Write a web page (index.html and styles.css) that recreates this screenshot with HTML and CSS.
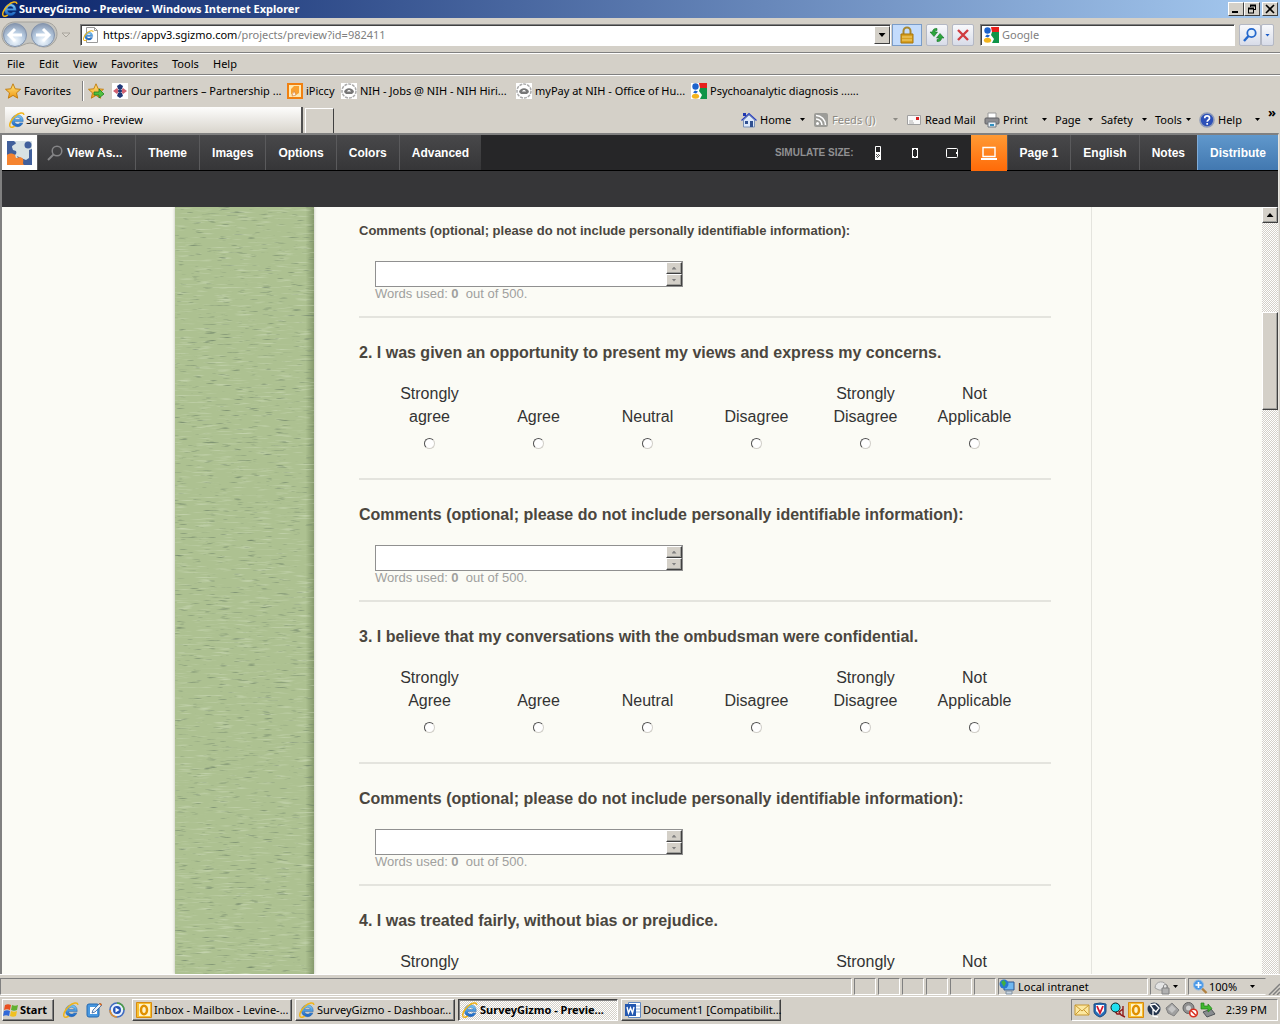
FILE: index.html
```html
<!DOCTYPE html>
<html lang="en">
<head>
<meta charset="utf-8">
<title>SurveyGizmo - Preview - Windows Internet Explorer</title>
<link rel="stylesheet" href="styles.css">
</head>
<body>
<svg class="sprite" aria-hidden="true">
  <defs>
    <linearGradient id="blueball" x1="0" y1="0" x2="0" y2="1"><stop offset="0" stop-color="#7fd0fa"/><stop offset="1" stop-color="#1660c0"/></linearGradient>
    <radialGradient id="navball" cx=".5" cy=".75" r=".7"><stop offset="0" stop-color="#f4faff"/><stop offset=".6" stop-color="#b4c8de"/><stop offset="1" stop-color="#8c9cb4"/></radialGradient>
    <linearGradient id="gold" x1="0" y1="0" x2="0" y2="1"><stop offset="0" stop-color="#ffe680"/><stop offset="1" stop-color="#f09810"/></linearGradient>
  </defs>
  <symbol id="ie" viewBox="0 0 16 16">
    <path d="M14.2 9.6H5.6c.2 1.600 1.300 2.500 2.900 2.500 1 0 1.800-.4 2.300-1.200h3c-.8 2.300-2.700 3.800-5.300 3.800-3.500 0-6-2.400-6-5.900 0-3.400 2.500-5.900 6-5.900 3.600 0 6 2.600 5.700 6.700zM5.700 7.400h5.500C11 6 10 5.200 8.500 5.200S5.900 6 5.700 7.400z" fill="url(#blueball)" stroke="#1450a0" stroke-width=".4"/>
    <path d="M15 2.800C14.500 0 10 .6 6 4.200 2 7.800-.4 12.900 1.300 14.700c1 1 2.900.5 4.500-.6" fill="none" stroke="#f0b418" stroke-width="1.500"/>
  </symbol>
  <symbol id="iepage" viewBox="0 0 16 16">
    <path d="M3.500.5h8l3 3v12h-11z" fill="#fff" stroke="#9a9a9a"/><path d="M11.500.5v3h3" fill="none" stroke="#9a9a9a"/>
    <use href="#ie" x="0" y="3" width="11" height="11"/>
  </symbol>
  <symbol id="star" viewBox="0 0 16 16"><path d="M8 .8l2.200 5 5.300.5-4 3.600 1.200 5.300L8 12.400l-4.700 2.800 1.200-5.300-4-3.600 5.300-.5z" fill="url(#gold)" stroke="#c07808" stroke-width=".9"/></symbol>
  <symbol id="google" viewBox="0 0 16 16">
    <path d="M0 0h16v16H0z" fill="#fff"/><path d="M8 0h8v5H9z" fill="#e8201c"/><path d="M9 5h7v11H9l2-4-3-4z" fill="#0f9448"/>
    <ellipse cx="4.500" cy="3.500" rx="3.200" ry="3.300" fill="#1c62cc"/><path d="M4 7.500l3 1-2 2-3-1z" fill="#1c62cc"/><ellipse cx="4.500" cy="13.300" rx="3.600" ry="2.500" fill="#f4b41c"/>
  </symbol>
  <symbol id="eagle" viewBox="0 0 16 16"><path d="M0 0h16v16H0z" fill="#fff"/><circle cx="8" cy="8" r="7" fill="none" stroke="#aaa" stroke-width="1.500" stroke-dasharray="3 1"/><path d="M3 9c1-5 9-5 10 0l-2 2H5z" fill="#777"/><path d="M6 8.500c1-2 3-2 4 0z" fill="#fff"/></symbol>
  <symbol id="outlook" viewBox="0 0 16 16"><path d="M.5.500h15v15H.5z" fill="#f7c030" stroke="#d88a10"/><path d="M3 2h11v12H3z" fill="#fff3c8"/><ellipse cx="8" cy="8" rx="3" ry="4.200" fill="none" stroke="#e09000" stroke-width="2.500"/></symbol>
  <symbol id="magnifier" viewBox="0 0 16 16"><circle cx="9.500" cy="6" r="4.200" fill="#e4f0fc" stroke="#2468cc" stroke-width="1.800"/><path d="M6.500 9L2 14" stroke="#2468cc" stroke-width="2.400"/></symbol>
</svg>

<header class="titlebar">
  <svg class="icon"><use href="#ie"/></svg>
  <h1 class="title">SurveyGizmo - Preview - Windows Internet Explorer</h1>
  <button class="winbtn" aria-label="Minimize"><svg width="12" height="10"><path d="M2 7h6v2H2z"/></svg></button>
  <button class="winbtn" aria-label="Restore"><svg width="12" height="10"><path d="M4 .5h6v2H4zM9 1h1v5H9zM4 1h1v2H4zM8 5h2v1H8zM2 3.500h6v2H2zM2 4h1v5H2zM7 4h1v5H7zM2 8.500h6v1H2z"/></svg></button>
  <button class="winbtn winclose" aria-label="Close"><svg width="12" height="10"><path d="M2 1l8 8M10 1L2 9" stroke="#000" stroke-width="1.600"/></svg></button>
</header>

<div class="addressbar">
  <svg class="nav" width="74" height="30" viewBox="0 0 74 30">
    <path d="M15 2h29c8 0 13 5 13 12s-6 13-13 13c-6 0-9-4-14-4s-9 4-15 4C7 27 2 22 2 15S7 2 15 2z" fill="#c4c4c0" stroke="#a4a29c"/>
    <circle cx="15" cy="15" r="11.500" fill="url(#navball)" stroke="#8494ac"/><circle cx="43" cy="15" r="11.500" fill="url(#navball)" stroke="#8494ac"/>
    <path d="M22 15H9m6-6l-6 6 6 6M36 15h13m-6-6l6 6-6 6" fill="none" stroke="#fff" stroke-width="3"/>
    <path d="M62 13h8l-4 4z" fill="#dcd8d0" stroke="#a8a49c"/>
  </svg>
  <label class="urlbox">
    <svg class="icon"><use href="#iepage"/></svg>
    <span class="url" role="textbox">https<i>://</i>appv3.sgizmo.com<i>/projects/preview?id=982411</i></span>
    <button class="drop" aria-label="Show address history"><span class="caret wide"></span></button>
  </label>
  <button class="lock" aria-label="Security report"><svg width="16" height="18"><path d="M4.500 9V5a3.500 3.500 0 017 0v4" fill="none" stroke="#a88830" stroke-width="2"/><path d="M2 8h12v9H2z" fill="#d8a020" stroke="#a87408"/><path d="M3 11h10M3 14h10" stroke="#f4d478"/></svg></button>
  <button class="tool refresh" aria-label="Refresh"><svg width="16" height="16"><path d="M8 1.500C5.500 1 3.500 2.500 3.500 5H1l4 4.500L8.500 5H6c0-1 .7-1.700 2-1.500z" fill="#2ca63c" stroke="#187028" stroke-width=".6"/><path d="M8 14.500c2.500.5 4.500-1 4.500-3.500H15l-4-4.500L7.500 11H10c0 1-.7 1.700-2 1.500z" fill="#2ca63c" stroke="#187028" stroke-width=".6"/></svg></button>
  <button class="tool stop" aria-label="Stop"><svg width="16" height="16"><path d="M3 3l10 10M13 3L3 13" stroke="#d03c40" stroke-width="2.400"/></svg></button>
  <div class="search"><svg class="icon"><use href="#google"/></svg><input class="searchinput" type="text" placeholder="Google" aria-label="Search"></div>
  <div class="go">
    <button class="tool" aria-label="Search"><svg class="icon"><use href="#magnifier"/></svg></button><button class="tool narrow" aria-label="Search options"><span class="caret blue"></span></button>
  </div>
</div>

<nav class="menubar">
  <a href="#">File</a><a href="#">Edit</a><a href="#">View</a><a href="#">Favorites</a><a href="#">Tools</a><a href="#">Help</a>
</nav>

<nav class="favbar">
  <a href="#"><svg class="icon"><use href="#star"/></svg>Favorites</a>
  <a href="#" class="addfav" aria-label="Add to Favorites Bar"><svg class="icon"><use href="#star"/><path d="M6 9h5V6l5 5-5 4v-3H6z" fill="#50c040" stroke="#208020" stroke-width=".8"/></svg></a>
  <a href="#"><svg class="icon"><path d="M0 0h16v16H0z" fill="#fff"/><path d="M8 1l3 2-1 3H6L5 3zM8 15l3-2-1-3H6l-1 3z" fill="#203878"/><path d="M1 8l4-3 2 3-2 3zM15 8l-4-3-2 3 2 3z" fill="#d06070"/><circle cx="8" cy="8" r="2" fill="#203878"/></svg>Our partners – Partnership ...</a>
  <a href="#"><svg class="icon"><path d="M1 1h14v14H1z" fill="#ffe8b0" stroke="#f08010" stroke-width="2"/><path d="M4 12V6l3-3h5v7l-3 2-2-4z" fill="#f8a030"/><path d="M5 13l2-5 2 4z" fill="#fff" stroke="#d07020" stroke-width=".6"/></svg>iPiccy</a>
  <a href="#"><svg class="icon"><use href="#eagle"/></svg>NIH - Jobs @ NIH - NIH Hiri...</a>
  <a href="#"><svg class="icon"><use href="#eagle"/></svg>myPay at NIH - Office of Hu...</a>
  <a href="#"><svg class="icon"><use href="#google"/></svg>Psychoanalytic diagnosis ......</a>
</nav>

<div class="tabrow">
  <button class="tab"><svg class="icon"><use href="#ie"/></svg>SurveyGizmo - Preview</button>
  <button class="newtab" aria-label="New tab"></button>
  <div class="commands">
    <button><svg class="icon"><path d="M2.500 8v7h11V8L8 3z" fill="#dce8fa" stroke="#7890b8"/><path d="M.5 8.500L8 1.500l7.500 7" fill="none" stroke="#2840c0" stroke-width="1.200"/><path d="M2 1h3v3H2z" fill="#2038b0"/><path d="M4 9h3v3H4zM9 9h3v6H9z" fill="#305090"/></svg><span>Home</span><span class="caret"></span></button>
    <button class="off"><svg class="icon"><rect x="1" y="1" width="14" height="14" rx="2" fill="#9c9c98"/><circle cx="4.500" cy="11.500" r="1.500" fill="#fff"/><path d="M3 7a6 6 0 016 6M3 3.500A9.500 9.500 0 0112.500 13" fill="none" stroke="#fff" stroke-width="1.600"/></svg><span>Feeds (J)</span><span class="caret"></span></button>
    <button><svg class="icon"><path d="M1.500 3.500h13v9h-13z" fill="#fafafa" stroke="#a0a0a0"/><path d="M10 5h3v3h-3z" fill="#d82020"/><path d="M3 9h4M3 11h5" stroke="#b0b0b0"/></svg><span>Read Mail</span></button>
    <button><svg class="icon"><path d="M4 1h8v6H4z" fill="#fff" stroke="#999"/><rect x="1" y="6" width="14" height="6" rx="1" fill="#8c8c90" stroke="#606064"/><path d="M4 10h8v5H4z" fill="#e8f0f8" stroke="#707880"/><path d="M6 12h4v2H6z" fill="#3090c0"/></svg><span>Print</span><span class="caret"></span></button>
    <button><span>Page</span><span class="caret"></span></button>
    <button><span>Safety</span><span class="caret"></span></button>
    <button><span>Tools</span><span class="caret"></span></button>
    <button><svg class="icon"><circle cx="8" cy="8" r="7" fill="#2c50b8" stroke="#909cb8" stroke-width="1.600"/><path d="M5.700 6.200c0-3 4.800-3 4.800 0 0 1.600-2.300 1.800-2.300 3.600M8.200 11v1.700" fill="none" stroke="#fff" stroke-width="1.700"/></svg><span>Help</span><span class="caret"></span></button>
    <button class="more" aria-label="More commands">»</button>
  </div>
</div>

<div class="view">
  <nav class="gizmo">
    <a href="#" class="logo" aria-label="SurveyGizmo"><svg width="25" height="24"><path d="M0 0h25v24H0z" fill="#d8e2e4"/><path d="M0 0h7l2 2c-1 2-4 2-4 4l1 3 3 1c1 2 0 4-2 4H0z" fill="#41609c"/><path d="M10 15l4 2 5 2 3-2V9l3-1v16H14z" fill="#41609c"/><path d="M11 11l4 1 3 4 3 0V10h-4z" fill="#d8e2e4"/><circle cx="21" cy="4" r="3.500" fill="#41609c"/><path d="M0 14c2-2 6-2 8 0 1 1 0 3 2 3 2-1 5-1 6 1 1 3-1 4 1 6H0z" fill="#f58430"/></svg></a>
    <a href="#" class="first"><svg class="icon"><circle cx="10" cy="6" r="4.800" fill="none" stroke="#858587" stroke-width="1.500"/><path d="M6.500 9.500L1 15" stroke="#858587" stroke-width="2"/></svg>View As...</a>
    <a href="#">Theme</a><a href="#">Images</a><a href="#">Options</a><a href="#">Colors</a><a href="#" class="last">Advanced</a>
    <span class="simulate">SIMULATE SIZE:</span>
    <button class="size" aria-label="Feature phone"><svg width="16" height="16"><path d="M5.500 1.500h5v13h-5z" fill="none" stroke="#fff"/><path d="M5 7h6v8H5z" fill="#fff"/><path d="M6 9h1v1H6zM8 9h1v1H8zM7 10h1v1H7zM9 10h1v1H9zM6 11h1v1H6zM8 11h1v1H8zM7 12h1v1H7z" fill="#555"/></svg></button>
    <button class="size" aria-label="Smartphone"><svg width="16" height="16"><path d="M5.500 3.500h5v9h-5z" fill="none" stroke="#fff"/><path d="M5 3h6v2H5zM5 11h6v2H5z" fill="#fff"/><path d="M7 4h2v1H7zM7 11h2v1H7z" fill="#28282a"/></svg></button>
    <button class="size" aria-label="Tablet"><svg width="16" height="16"><rect x="2.500" y="3.500" width="11" height="9" rx="1" fill="none" stroke="#fff"/><path d="M12 7h1v2h-1z" fill="#fff"/></svg></button>
    <button class="size active" aria-label="Desktop"><svg width="16" height="16"><path d="M2 2.500h12v9H2z" fill="none" stroke="#fff" stroke-width="1.400"/><path d="M0 13h16v2H0z" fill="#fff"/></svg></button>
    <a href="#">Page 1</a><a href="#">English</a><a href="#">Notes</a><a href="#" class="distribute">Distribute</a>
  </nav>
  <div class="subbar"></div>

  <div class="scroller">
    <div class="page">
      <div class="survey">
        <aside class="texture">
          <svg width="100%" height="100%" aria-hidden="true">
            <filter id="darkgrain" x="0" y="0" width="100%" height="100%" color-interpolation-filters="sRGB"><feTurbulence type="fractalNoise" baseFrequency=".07 .6" numOctaves="2" seed="4"/><feColorMatrix values="0 0 0 0 .42  0 0 0 0 .5  0 0 0 0 .4  3 0 0 0 -1.920"/></filter>
            <filter id="lightgrain" x="0" y="0" width="100%" height="100%" color-interpolation-filters="sRGB"><feTurbulence type="fractalNoise" baseFrequency=".05 .6" numOctaves="2" seed="9"/><feColorMatrix values="0 0 0 0 .82  0 0 0 0 .87  0 0 0 0 .75  2 0 0 0 -1.140"/></filter>
            <rect width="100%" height="100%" filter="url(#lightgrain)"/><rect width="100%" height="100%" filter="url(#darkgrain)"/>
          </svg>
        </aside>
        <main class="questions">
          <section class="question">
            <label class="heading small" for="c1">Comments (optional; please do not include personally identifiable information):</label>
            <div class="essay"><textarea id="c1" rows="1"></textarea><span class="spin"><button class="up" aria-label="Scroll up"></button><button class="down" aria-label="Scroll down"></button></span></div>
            <p class="words">Words used: <b>0</b>&nbsp; out of 500.</p>
          </section>
          <section class="question">
            <h2 class="heading" id="q2">2. I was given an opportunity to present my views and express my concerns.</h2>
            <table class="scale" aria-labelledby="q2">
              <thead><tr><th>Strongly<br>agree</th><th>Agree</th><th>Neutral</th><th>Disagree</th><th>Strongly<br>Disagree</th><th>Not<br>Applicable</th></tr></thead>
              <tbody><tr><td><input type="radio" name="q2" aria-label="Strongly agree"></td><td><input type="radio" name="q2" aria-label="Agree"></td><td><input type="radio" name="q2" aria-label="Neutral"></td><td><input type="radio" name="q2" aria-label="Disagree"></td><td><input type="radio" name="q2" aria-label="Strongly Disagree"></td><td><input type="radio" name="q2" aria-label="Not Applicable"></td></tr></tbody>
            </table>
          </section>
          <section class="question">
            <label class="heading" for="c2">Comments (optional; please do not include personally identifiable information):</label>
            <div class="essay"><textarea id="c2" rows="1"></textarea><span class="spin"><button class="up" aria-label="Scroll up"></button><button class="down" aria-label="Scroll down"></button></span></div>
            <p class="words">Words used: <b>0</b>&nbsp; out of 500.</p>
          </section>
          <section class="question">
            <h2 class="heading" id="q3">3. I believe that my conversations with the ombudsman were confidential.</h2>
            <table class="scale" aria-labelledby="q3">
              <thead><tr><th>Strongly<br>Agree</th><th>Agree</th><th>Neutral</th><th>Disagree</th><th>Strongly<br>Disagree</th><th>Not<br>Applicable</th></tr></thead>
              <tbody><tr><td><input type="radio" name="q3" aria-label="Strongly Agree"></td><td><input type="radio" name="q3" aria-label="Agree"></td><td><input type="radio" name="q3" aria-label="Neutral"></td><td><input type="radio" name="q3" aria-label="Disagree"></td><td><input type="radio" name="q3" aria-label="Strongly Disagree"></td><td><input type="radio" name="q3" aria-label="Not Applicable"></td></tr></tbody>
            </table>
          </section>
          <section class="question">
            <label class="heading" for="c3">Comments (optional; please do not include personally identifiable information):</label>
            <div class="essay"><textarea id="c3" rows="1"></textarea><span class="spin"><button class="up" aria-label="Scroll up"></button><button class="down" aria-label="Scroll down"></button></span></div>
            <p class="words">Words used: <b>0</b>&nbsp; out of 500.</p>
          </section>
          <section class="question">
            <h2 class="heading" id="q4">4. I was treated fairly, without bias or prejudice.</h2>
            <table class="scale" aria-labelledby="q4">
              <thead><tr><th>Strongly</th><th></th><th></th><th></th><th>Strongly</th><th>Not</th></tr></thead>
            </table>
          </section>
        </main>
      </div>
    </div>
    <div class="scrollbar"><button class="sbup" aria-label="Scroll page up"><span class="caret rise"></span></button><div class="thumb"></div></div>
  </div>
</div>

<footer class="statusbar">
  <span class="pane wide"></span><span class="pane"></span><span class="pane"></span><span class="pane"></span><span class="pane"></span><span class="pane"></span><span class="pane"></span>
  <span class="pane zone"><svg class="icon"><path d="M5 3h10v8H5z" fill="#70b8f0" stroke="#305890"/><path d="M7 12h6v3H7z" fill="#c8d4e0" stroke="#8090a0"/><circle cx="5" cy="5" r="4.500" fill="#2878d0"/><path d="M2 3l3-2 2 3-2 4z" fill="#40b040"/></svg>Local intranet</span>
  <span class="pane shield"><svg class="icon"><path d="M1 9c0-8 11-8 12-1l-3 3H5z" fill="#e4e4e4" stroke="#a0a0a0"/><path d="M8 9h7v6H8z" fill="#b0b0b0" stroke="#808080"/><path d="M9.500 9V7c0-2 4-2 4 0v2" fill="none" stroke="#888"/></svg><span class="caret"></span></span>
  <span class="pane zoom"><svg class="icon"><path d="M9.500 9l5 5" stroke="#b08040" stroke-width="2.400"/><circle cx="6.500" cy="6" r="5" fill="#4898e8" stroke="#90b8e0"/><path d="M6.500 3v6M3.500 6h6" stroke="#fff" stroke-width="1.600"/></svg>100%<span class="caret"></span></span>
  <svg class="grip" width="12" height="12"><path d="M1 12L12 1M5 12l7-7M9 12l3-3" stroke="#808080" stroke-width="1.500"/></svg>
</footer>

<footer class="taskbar">
  <button class="start"><svg class="icon"><path d="M2 3c2-1 4-1 6 0L7 8C5 7 3 7 1 8z" fill="#e85020"/><path d="M9 3c2 1 4 1 6 0l-1 5c-2 1-4 1-6 0z" fill="#60b030"/><path d="M1 9c2-1 4-1 6 0l-1 5c-2-1-4-1-6 0z" fill="#3068d8"/><path d="M8 9c2 1 4 1 6 0l-1 5c-2 1-4 1-6 0z" fill="#f0c020"/></svg>Start</button>
  <div class="quick">
    <a href="#" aria-label="Internet Explorer"><svg class="icon"><use href="#ie"/></svg></a>
    <a href="#" aria-label="Show Desktop"><svg class="icon"><rect x="1" y="2" width="12" height="13" rx="2" fill="#4898e0" stroke="#2468b0"/><path d="M4 5h7v7H4z" fill="#fff"/><path d="M6 11l1-3 7-7 2 2-7 7z" fill="#e8f0f8" stroke="#3060a0" stroke-width=".8"/><path d="M13 2l2 2 1-2-2-1z" fill="#e07020"/></svg></a>
    <a href="#" aria-label="Media Player"><svg class="icon"><circle cx="8" cy="8" r="7" fill="#e8f0fc" stroke="#406cc0" stroke-width="1.600"/><path d="M8 1a7 7 0 017 7" fill="none" stroke="#50a040" stroke-width="1.600"/><path d="M1 8a7 7 0 007 7" fill="none" stroke="#e09030" stroke-width="1.600"/><circle cx="8" cy="8" r="4" fill="#2454b8"/><path d="M6.500 5.500v5l4-2.500z" fill="#fff"/></svg></a>
  </div>
  <div class="tasks">
    <button class="task"><svg class="icon"><use href="#outlook"/></svg>Inbox - Mailbox - Levine-...</button>
    <button class="task"><svg class="icon"><use href="#ie"/></svg>SurveyGizmo - Dashboar...</button>
    <button class="task current"><svg class="icon"><use href="#ie"/></svg>SurveyGizmo - Previe...</button>
    <button class="task"><svg class="icon"><path d="M3.500.5h12v15h-12z" fill="#fff" stroke="#6088c0"/><path d="M11 4h4M11 7h4M11 10h4" stroke="#90b0d8"/><path d="M0 2h11v12H0z" fill="#2458b0"/><path d="M2 5l1.500 6L5.500 6l2 5L9 5" fill="none" stroke="#fff" stroke-width="1.400"/></svg>Document1 [Compatibilit...</button>
  </div>
  <div class="tray">
    <svg class="icon"><path d="M1 3h14v10H1z" fill="#fce8a0" stroke="#c89830"/><path d="M1 3l7 6 7-6M1 13l5-5M15 13l-5-5" fill="none" stroke="#c89830"/></svg>
    <svg class="icon"><path d="M2 2l6-1 6 1v7c0 3-3 5-6 6-3-1-6-3-6-6z" fill="#2870b8" stroke="#184880"/><path d="M4 3h8v6l-4 4-4-4z" fill="#fff"/><path d="M5 4l3 7 3-7" fill="none" stroke="#d01830" stroke-width="1.800"/></svg>
    <svg class="icon"><path d="M13 4v10M13 7l-4 3 2 3 4 2M5 9l2 3h3" fill="none" stroke="#901818" stroke-width="1.400"/><circle cx="5.500" cy="5.500" r="4.500" fill="#20e0f0" stroke="#102020"/></svg>
    <svg class="icon"><use href="#outlook"/></svg>
    <svg class="icon"><circle cx="8" cy="7" r="6.500" fill="#24344c"/><path d="M4 3l5-1 4 4-3 4-3-3zM7 7v7l5 1" fill="none" stroke="#fff" stroke-width="1.300"/></svg>
    <svg class="icon"><path d="M8 1l7 7-5 6-6-3-2-5z" fill="#a0a0a0" stroke="#808080"/><path d="M8 3l4 4-4 4-4-4z" fill="#c4c4c4"/></svg>
    <svg class="icon"><circle cx="6.500" cy="6" r="5.500" fill="#909090" stroke="#606060"/><circle cx="6.500" cy="6" r="2.500" fill="#d0d0d0"/><circle cx="11.500" cy="11" r="3.800" fill="#fff" stroke="#d83020" stroke-width="1.600"/><path d="M9 8.500l5 5" stroke="#d83020" stroke-width="1.500"/></svg>
    <svg class="icon"><path d="M3 10l8-3 4 5-8 3z" fill="#888c90" stroke="#505458"/><path d="M1 1h3v3h4V2l4 4.500L8 10V7H1z" fill="#40b830" stroke="#208018" stroke-width=".7"/></svg>
    <time>2:39 PM</time>
  </div>
</footer>
</body>
</html>
```
FILE: styles.css
```css
:root {
  --face: #d4d0c8;
  --shadow: #808080;
  --ink: #404040;
  --paper: #fbfbf5;
  --ui: Tahoma, "Noto Sans", sans-serif;
  --web: Arial, "Liberation Sans", sans-serif;
}
* { box-sizing: border-box; }
body {
  margin: 0;
  height: 100vh;
  display: flex;
  flex-direction: column;
  overflow: hidden;
  background: var(--face);
  color: #000;
  font: 11px/16px var(--ui);
}
button, input, textarea { margin: 0; padding: 0; border: 0; border-radius: 0; background: none; color: inherit; font: inherit; }
a { color: inherit; text-decoration: none; }
svg { flex: none; display: block; }
.sprite { position: absolute; width: 0; height: 0; }
.icon { width: 16px; height: 16px; overflow: visible; }
.caret { flex: none; width: 5px; height: 3px; background: currentColor; clip-path: polygon(0 0, 100% 0, 50% 100%); }
.caret.wide { width: 7px; height: 4px; }
.caret.rise { width: 7px; height: 4px; clip-path: polygon(50% 0, 100% 100%, 0 100%); }
.caret.blue { color: #1c5cc8; }

/* window title */
.titlebar { display: flex; align-items: center; height: 18px; padding: 0 2px; background: linear-gradient(90deg, #0a246a, #a6caf0); }
.title { flex: 1; margin: 0 0 0 1px; color: #fff; font: bold 11px/18px var(--ui); }
.winbtn { display: grid; place-items: center; width: 16px; height: 14px; background: var(--face); border: 1px solid; border-color: #fff var(--ink) var(--ink) #fff; }
.winclose { margin-left: 2px; }

/* address row */
.addressbar { display: flex; align-items: center; height: 35px; padding: 0 6px 0 0; border-bottom: 1px solid var(--shadow); }
.nav { margin-right: 6px; }
.urlbox { flex: 1; display: flex; align-items: center; height: 22px; padding-left: 2px; background: #fff; border: 1px solid; border-color: var(--shadow) #fff #fff var(--shadow); box-shadow: inset 1px 1px var(--ink); }
.url { flex: 1; padding-left: 4px; }
.url i { color: #808080; font-style: normal; }
.drop { display: grid; place-items: center; width: 16px; height: 18px; background: var(--face); border: 1px solid; border-color: #fff var(--ink) var(--ink) #fff; }
.lock { display: grid; place-items: center; width: 30px; height: 22px; margin: 0 4px 0 1px; background: #c4dcfc; border: 1px solid #7a9cc8; }
.tool { display: grid; place-items: center; width: 22px; height: 22px; background: linear-gradient(#f8f9fc, #d8dce8); border: 1px solid #b4b8c4; border-radius: 2px; }
.refresh { margin-right: 4px; }
.stop { margin-right: 6px; }
.search { display: flex; align-items: center; width: 255px; height: 22px; padding-left: 2px; background: #fff; border: 1px solid; border-color: var(--shadow) #fff #fff var(--shadow); box-shadow: inset 1px 1px var(--ink); }
.searchinput { flex: 1; min-width: 0; padding-left: 3px; }
.searchinput::placeholder { color: #808080; opacity: 1; }
.go { display: flex; margin-left: 4px; }
.go .narrow { width: 13px; }

/* menus and favourites */
.menubar { display: grid; grid-template-columns: 32px 34px 38px 61px 41px 1fr; align-items: center; height: 22px; padding-left: 7px; border-top: 1px solid #fff; border-bottom: 1px solid var(--shadow); }
.favbar { display: grid; grid-template-columns: 77px 30px 175px 54px 175px 175px 1fr; align-items: center; height: 31px; padding-left: 5px; border-top: 1px solid #fff; white-space: nowrap; }
.favbar a { display: flex; align-items: center; gap: 3px; }
.favbar .addfav { height: 20px; padding-left: 5px; border-left: 1px solid var(--shadow); box-shadow: inset 1px 0 #fff; }

/* tab strip and command bar */
.tabrow { display: flex; align-items: flex-end; height: 27px; padding-left: 5px; }
.tab { display: flex; align-items: center; gap: 1px; width: 298px; height: 26px; padding-left: 4px; background: linear-gradient(#fdfdfc, #d8d4cc); border-right: 2px solid #505050; }
.newtab { width: 29px; height: 25px; margin-left: 2px; border: 1px solid #fff; border-right: 1px solid var(--ink); border-bottom: 0; }
.commands { display: grid; grid-template-columns: 72px 93px 78px 71px 46px 54px 44px 69px 12px; margin-left: auto; height: 27px; white-space: nowrap; }
.commands button { display: flex; align-items: center; gap: 3px; padding-right: 8px; }
.commands .caret { margin-left: auto; }
.commands .off { color: #8c8a84; text-shadow: 1px 1px #fff; }
.commands .more { align-items: flex-start; padding: 0; font-size: 13px; font-weight: bold; line-height: 12px; }

/* survey preview toolbar */
.view { flex: 1; min-height: 0; display: flex; flex-direction: column; margin-right: 1px; border: solid var(--shadow); border-width: 2px 1px 0 2px; border-right-color: #e8e6e0; }
.gizmo { display: flex; height: 36px; background: #262628; border-bottom: 1px solid #000; color: #fff; font: bold 12px/36px var(--web); white-space: nowrap; }
.gizmo a { height: 35px; padding: 0 12px; background: linear-gradient(#48484a, #363638); border-left: 1px solid #5a5a5c; }
.gizmo .logo { display: grid; place-items: center; width: 35px; padding: 0; background: #fff; border: 0; }
.gizmo .first { display: flex; align-items: center; gap: 4px; padding: 0 13px 0 9px; }
.gizmo .simulate { margin-left: auto; padding-right: 6px; color: #909092; font-size: 10px; }
.size { display: grid; place-items: center; width: 37px; }
.size.active { width: 36px; height: 36px; background: linear-gradient(#ff9a34, #ff6a08); }
.gizmo .distribute { background: linear-gradient(#6098cc, #4278b0); border-left-color: #80acd8; }
.subbar { height: 36px; background: #363638; }

/* scrolled page */
.scroller { flex: 1; min-height: 0; display: flex; background: var(--paper); }
.page { flex: 1; overflow: hidden; padding-left: 3px; font-family: var(--web); color: #333; }
.survey { display: flex; width: 917px; max-width: 100%; height: 100%; margin: 0 auto; border-right: 1px solid #e4e4de; }
.texture { flex: none; display: grid; width: 139px; background: linear-gradient(90deg, transparent 94%, rgba(60, 80, 40, .35)), #adc191; box-shadow: 0 0 3px rgba(60, 70, 50, .35); }
.questions { flex: 1; min-width: 0; margin-top: -10px; padding: 0 40px 0 45px; }
.question { padding-top: 22px; border-bottom: 2px solid #e4e4de; }
.heading { display: block; margin: 0; color: #4a463e; font: bold 16px/23px var(--web); }
.heading.small { font-size: 13px; }
.essay { display: flex; width: 308px; height: 26px; margin: 19px 0 0 16px; background: #fff; border: 1px solid #909090; }
.essay textarea { flex: 1; min-width: 0; padding: 4px; resize: none; outline: 0; overflow: hidden; }
.spin { display: flex; flex-direction: column; width: 16px; }
.spin button, .sbup, .thumb { display: grid; place-items: center; background: var(--face); border: 1px solid; border-color: #fff var(--ink) var(--ink) #fff; box-shadow: inset -1px -1px #a0a09c; }
.spin button { flex: 1; }
.spin button::before { content: ""; width: 5px; height: 3px; background: var(--shadow); clip-path: polygon(0 0, 100% 0, 50% 100%); }
.spin .up::before { clip-path: polygon(50% 0, 100% 100%, 0 100%); }
.words { margin: 0 0 15px 16px; color: #a0a09e; font-size: 13px; line-height: 14px; }
.scale { width: 654px; margin: 18px 0 21px 16px; border-collapse: collapse; table-layout: fixed; font-size: 16px; line-height: 23px; text-align: center; }
.scale th { padding: 0; font-weight: normal; vertical-align: bottom; }
.scale td { height: 30px; padding: 0; line-height: 0; }
.question + .question { padding-top: 23px; }
.question + .question .scale { margin-bottom: 20px; }
.question + .question .essay { margin-top: 19px; }
.scale input { appearance: none; width: 11px; height: 11px; vertical-align: middle; background: #fff; border: 1px solid; border-color: #505050 #d0cec8 #d0cec8 #505050; border-radius: 50%; }
.scrollbar { width: 16px; background: repeating-conic-gradient(#fff 0 25%, var(--face) 0 50%) 0 0 / 2px 2px; }
.sbup { width: 16px; height: 16px; }
.thumb { height: 98px; margin-top: 89px; }

/* status bar */
.statusbar { display: flex; gap: 2px; height: 23px; padding: 3px 0 1px; border-top: 1px solid #fff; border-bottom: 1px solid #fff; }
.pane { display: flex; align-items: center; width: 22px; border: 1px solid; border-color: var(--shadow) #fff #fff var(--shadow); white-space: nowrap; }
.pane.wide { flex: 1; }
.pane.zone { gap: 3px; width: 150px; }
.pane.shield { width: 36px; gap: 3px; padding-left: 3px; }
.pane.zoom { width: 78px; gap: 1px; padding: 0 10px 0 3px; border-right-color: transparent; }
.pane.zoom .caret { margin-left: auto; }
.grip { align-self: flex-end; }

/* task bar */
.taskbar { display: flex; align-items: center; height: 27px; padding: 2px 2px 3px; }
.start, .task { display: flex; align-items: center; gap: 3px; height: 22px; border: 1px solid; border-color: #fff var(--ink) var(--ink) #fff; box-shadow: inset -1px -1px var(--shadow); white-space: nowrap; }
.start { width: 52px; gap: 1px; font-weight: bold; }
.quick { display: flex; gap: 7px; width: 78px; padding-left: 9px; }
.tasks { display: flex; gap: 3px; }
.task { width: 160px; gap: 2px; padding-left: 3px; }
.task.current { border-color: var(--ink) #fff #fff var(--ink); box-shadow: inset 1px 1px var(--shadow); background: repeating-conic-gradient(#fff 0 25%, var(--face) 0 50%) 0 0 / 2px 2px; font-weight: bold; }
.tray { display: flex; align-items: center; gap: 2px; height: 22px; margin-left: auto; padding: 0 10px 0 2px; border: 1px solid; border-color: var(--shadow) #fff #fff var(--shadow); }
.tray time { margin-left: 8px; }
```
